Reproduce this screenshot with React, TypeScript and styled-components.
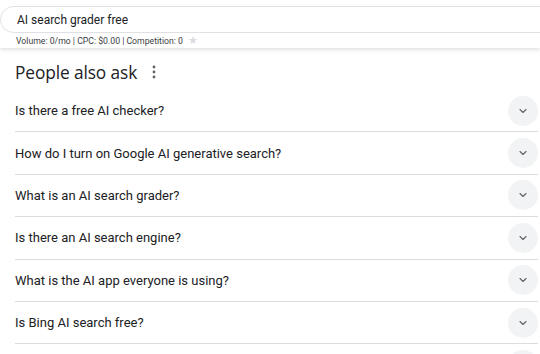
import React from 'react';
import styled, { createGlobalStyle } from 'styled-components';

const GlobalStyle = createGlobalStyle`
  html, body {
    margin: 0;
    padding: 0;
    background: #ffffff;
    overflow: hidden;
  }
  body {
    font-family: Roboto, "Liberation Sans", Arial, sans-serif;
    color: #202124;
  }
`;

const Page = styled.div`
  width: 540px;
  height: 354px;
  overflow: hidden;
`;

const Header = styled.header`
  padding: 6px 0 0 0;
  height: 48px;
  box-sizing: border-box;
  background: #ffffff;
  box-shadow: 0 2px 4px rgba(0, 0, 0, 0.12);
  position: relative;
  z-index: 1;
`;

const SearchBox = styled.div`
  height: 27px;
  box-sizing: border-box;
  margin-right: -20px;
  border: 1px solid #dfe1e5;
  border-radius: 14px;
  display: flex;
  align-items: center;
  padding-left: 16px;
  font-size: 12px;
  color: #202124;
`;

const Metrics = styled.div`
  display: flex;
  align-items: center;
  gap: 5px;
  padding: 1px 0 0 16px;
  font-size: 8.7px;
  color: #3c4043;
  line-height: 14px;
`;

const Star = styled.span`
  color: #dadce0;
  font-size: 11px;
`;

const Section = styled.section`
  padding: 5px 0 0 15px;
`;

const TitleRow = styled.div`
  display: flex;
  align-items: center;
  gap: 15px;
  height: 32px;
  margin-top: 3px;
`;

const Title = styled.h2`
  margin: 0;
  font-size: 17.3px;
  font-weight: 400;
  color: #202124;
  font-family: "Open Sans", Roboto, sans-serif;
  letter-spacing: -0.1px;
`;

const List = styled.div`
  margin-top: 2px;
  margin-right: 2px;
`;

const Row = styled.div`
  display: flex;
  align-items: center;
  justify-content: space-between;
  height: 41.4px;
  border-bottom: 1px solid #dadce0;
  font-size: 13px;
  color: #202124;
`;

const Chevron = styled.div`
  width: 30px;
  height: 30px;
  border-radius: 50%;
  background: #f1f3f4;
  display: flex;
  align-items: center;
  justify-content: center;
  color: #5f6368;
`;

const questions = [
  'Is there a free AI checker?',
  'How do I turn on Google AI generative search?',
  'What is an AI search grader?',
  'Is there an AI search engine?',
  'What is the AI app everyone is using?',
  'Is Bing AI search free?',
  '',
];

const ChevronIcon = () => (
  <svg width="12" height="12" viewBox="0 0 24 24" fill="none">
    <path d="M6 9l6 6 6-6" stroke="currentColor" strokeWidth="2.2" strokeLinecap="round" strokeLinejoin="round" />
  </svg>
);

const DotsIcon = () => (
  <svg width="4" height="14" viewBox="0 0 4 14">
    <circle cx="2" cy="2" r="1.4" fill="#5f6368" />
    <circle cx="2" cy="7" r="1.4" fill="#5f6368" />
    <circle cx="2" cy="12" r="1.4" fill="#5f6368" />
  </svg>
);

export default function App() {
  return (
    <Page>
      <GlobalStyle />
      <Header>
        <SearchBox>AI search grader free</SearchBox>
        <Metrics>
          <span>Volume: 0/mo | CPC: $0.00 | Competition: 0</span>
          <Star>★</Star>
        </Metrics>
      </Header>
      <Section>
        <TitleRow>
          <Title>People also ask</Title>
          <DotsIcon />
        </TitleRow>
        <List>
          {questions.map((q, i) => (
            <Row key={i}>
              <span>{q}</span>
              <Chevron>
                <ChevronIcon />
              </Chevron>
            </Row>
          ))}
        </List>
      </Section>
    </Page>
  );
}
